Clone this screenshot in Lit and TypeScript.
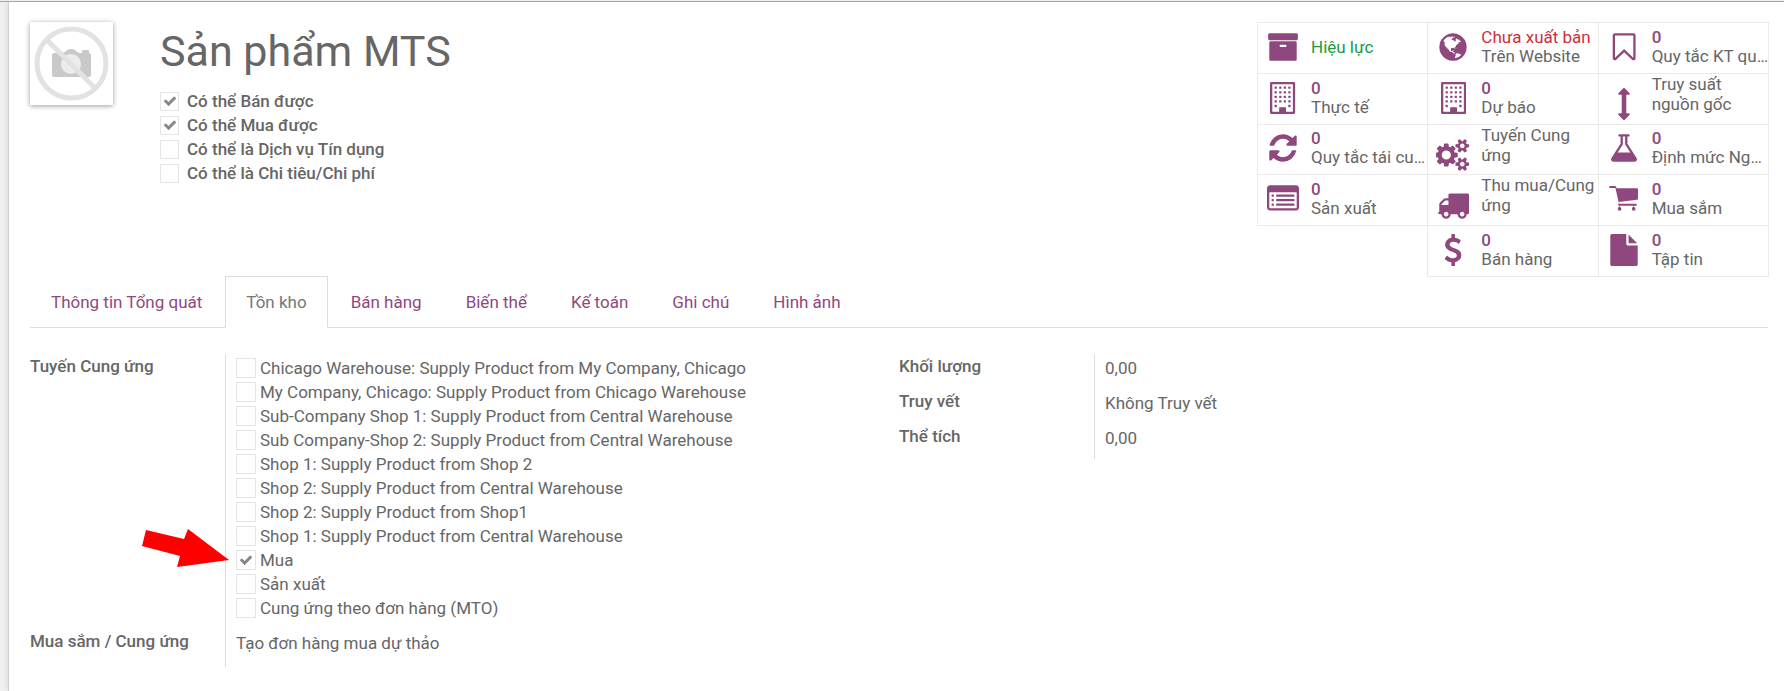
import { LitElement, html, svg, css, nothing } from "lit";
import { customElement, property, state } from "lit/decorators.js";
import { classMap } from "lit/directives/class-map.js";

const glyph = (d: string) => svg`<path d=${d}></path>`;

const dots = (xs: number[], ys: number[], size: number) =>
  ys.map((y) => xs.map((x) => svg`<rect x=${x} y=${y} width=${size} height=${size} rx="24"></rect>`));

const ICONS: Record<string, { width: number; body: unknown }> = {
  archive: {
    width: 1792,
    body: glyph(
      "M1088 832q0-26-19-45t-45-19h-256q-26 0-45 19t-19 45 19 45 45 19h256q26 0 45-19t19-45zm576-192v960q0 26-19 45t-45 19h-1408q-26 0-45-19t-19-45v-960q0-26 19-45t45-19h1408q26 0 45 19t19 45zm64-448v256q0 26-19 45t-45 19h-1536q-26 0-45-19t-19-45v-256q0-26 19-45t45-19h1536q26 0 45 19t19 45z"
    ),
  },
  globe: {
    width: 1792,
    body: glyph(
      "M896 128q209 0 385.500 103t279.500 279.500 103 385.500-103 385.500-279.500 279.500-385.500 103-385.500-103-279.500-279.500-103-385.500 103-385.500 279.500-279.500 385.500-103zm274 521q-2 1-9.500 9.500t-13.500 9.500q2 0 4.500-5t5-11 3.500-7q6-7 22-15 14-6 52-12 34-8 51 11-2-2 9.500-13t14.500-12q3-2 15-4.500t15-7.500l2-22q-12 1-17.500-7t-6.500-21q0 2-6 8 0-7-4.500-8t-11.500 1-9 1q-10-3-15-7.500t-8-16.500-4-15q-2-5-9.500-11t-9.500-10q-1-2-2.500-5.500t-3-6.500-4-5.500-5.500-2.500-7 5-7.500 10-4.500 5q-3-2-6-1.500t-4.500 1-4.500 3-5 3.500q-3 2-8.500 3t-8.500 2q15-5-1-11-10-4-16-3 9-4 7.500-12t-8.500-14h5q-1-4-8.500-8.500t-17.500-8.500-13-6q-8-5-34-9.500t-33-.5q-5 6-4.500 10.500t4 14 3.500 12.500q1 6-5.500 13t-6.500 12q0 7 14 15.500t10 21.500q-3 8-16 16t-16 12q-5 8-1.500 18.500t10.500 16.500q2 2 1.500 4t-3.500 4.500-5.500 4-6.500 3.500l-3 2q-11 5-20.500-6t-13.500-26q-7-25-16-30-23-8-29 1-5-13-41-26-25-9-58-4 6-1 0-15-7-15-19-12 3-6 4-17.500t1-13.500q3-13 12-23 1-1 7-8.500t9.500-13.500.5-6q35 4 50-11 5-5 11.500-17t10.500-17q9-6 14-5.500t14.500 5.500 14.500 5q14 1 15.500-11t-7.500-20q12 1 3-17-4-7-8-9-12-4-27 5-8 4 2 8-1-1-9.500 10.500t-16.500 17.500-16-5q-1-1-5.500-13.500t-9.500-13.500q-8 0-16 15 3-8-11-15t-24-8q19-12-8-27-7-4-20.500-5t-19.500 4q-5 7-5.500 11.500t5 8 10.500 5.500 11.500 4 8.500 3q14 10 8 14-2 1-8.500 3.500t-11.500 4.500-6 4q-3 4 0 14t-2 14q-5-5-9-17.500t-7-16.500q7 9-25 6l-10-1q-4 0-16 2t-20.500 1-13.500-8q-4-8 0-20 1-4 4-2-4-3-11-9.500t-10-8.500q-46 15-94 41 6 1 12-1 5-2 13-6.500t10-5.500q34-14 42-7l5-5q14 16 20 25-7-4-30-1-20 6-22 12 7 12 5 18-4-3-11.500-10t-14.500-11-15-5q-16 0-22 1-146 80-235 222 7 7 12 8 4 1 5 9t2.500 11 11.500-3q9 8 3 19 1-1 44 27 19 17 21 21 3 11-10 18-1-2-9-9t-9-4q-3 5 .5 18.500t10.500 12.500q-7 0-9.500 16t-2.500 35.500-1 23.500l2 1q-3 12 5.500 34.500t21.500 19.500q-13 3 20 43 6 8 8 9 3 2 12 7.500t15 10 10 10.500q4 5 10 22.500t14 23.500q-2 6 9.500 20t10.500 23q-1 0-2.500 1t-2.500 1q3 7 15.500 14t15.500 13q1 3 2 10t3 11 8 2q2-20-24-62-15-25-17-29-3-5-5.500-15.500t-4.500-14.500q2 0 6 1.500t8.500 3.500 7.500 4 2 3q-3 7 2 17.500t12 18.500 17 19 12 13q6 6 14 19.500t0 13.500q9 0 20 10.500t17 19.500q5 8 8 26t5 24q2 7 8.500 13.500t12.500 9.500l16 8 13 7q5 2 18.500 10.500t21.500 11.500q10 4 16 4t14.500-2.500 13.500-3.500q15-2 29 15t21 21q36 19 55 11-2 1 .5 7.500t8 15.500 9 14.500 5.500 8.500q5 6 18 15t18 15q6-4 7-9-3 8 7 20t18 10q14-3 14-32-31 15-49-18 0-1-2.500-5.500t-4-8.500-2.500-8.500 0-7.500 5-3q9 0 10-3.500t-2-12.500-4-13q-1-8-11-20t-12-15q-5 9-16 8t-16-9q0 1-1.500 5.500t-1.500 6.500q-13 0-15-1 1-3 2.500-17.500t3.500-22.500q1-4 5.500-12t7.500-14.500 4-12.500-4.500-9.500-17.500-2.500q-19 1-26 20-1 3-3 10.500t-5 11.500-9 7q-7 3-24 2t-24-5q-13-8-22.500-29t-9.500-37q0-10 2.500-26.500t3-25-5.500-24.500q3-2 9-9.500t10-10.500q2-1 4.500-1.500t4.500 0 4-1.500 3-6q-1-1-4-3-3-3-4-3 7 3 28.500-1.500t27.500 1.500q15 11 22-2 0-1-2.500-9.500t-.5-13.500q5 27 29 9 3 3 15.500 5t17.500 5q3 2 7 5.500t5.500 4.500 5-.5 8.500-6.500q10 14 12 24 11 40 19 44 7 3 11 2t4.500-9.500 0-14-1.500-12.500l-1-8v-18l-1-8q-15-3-18.500-12t1.500-18.500 15-18.500q1-1 8-3.500t15.500-6.500 12.500-8q21-19 15-35 7 0 11-9-1 0-5-3t-7.500-5-4.500-2q9-5 2-16 5-3 7.500-11t7.500-10q9 12 21 2 8-8 1-16 5-7 20.500-10.500t18.500-9.500q7 2 8-2t1-12 3-12q4-5 15-9t13-5l17-11q3-4 0-4 18 2 31-11 10-11-6-20 3-6-3-9.500t-15-5.500q3-1 11.500-.5t10.500-1.500q15-10-7-16-17-5-43 12zm-163 877q206-36 351-189-3-3-12.500-4.500t-12.500-3.500q-18-7-24-8 1-7-2.500-13t-8-9-12.500-8-11-7q-2-2-7-6t-7-5.500-7.500-4.500-8.500-2-10 1l-3 1q-3 1-5.500 2.500t-5.500 3-4 3 0 2.500q-21-17-36-22-5-1-11-5.500t-10.500-7-10-1.500-11.500 7q-5 5-6 15t-2 13q-7-5 0-17.500t2-18.500q-3-6-10.500-4.500t-12 4.500-11.500 8.500-9 6.500-8.500 5.500-8.500 7.500q-3 4-6 12t-5 11q-2-4-11.500-6.500t-9.500-5.500q2 10 4 35t5 38q7 31-12 48-27 25-29 40-4 22 12 26 0 7-8 20.500t-7 21.500q0 6 2 16z"
    ),
  },
  bookmark: {
    width: 1920,
    body: glyph(
      "M1472 256h-1024v1242l423-406 89-85 89 85 423 406v-1242zm12-128q23 0 44 9 33 13 52.500 41t19.500 62v1289q0 34-19.500 62t-52.500 41q-19 8-44 8-48 0-83-32l-441-424-441 424q-36 33-83 33-23 0-44-9-33-13-52.500-41t-19.500-62v-1289q0-34 19.500-62t52.500-41q21-9 44-9h1048z"
    ),
  },
  building: {
    width: 1408,
    body: svg`
      <path fill-rule="evenodd" d="M64 0h1280q64 0 64 64v1664q0 64-64 64h-1280q-64 0-64-64v-1664q0-64 64-64zM128 128v1536h384v-224q0-32 32-32h320q32 0 32 32v224h384v-1536z"></path>
      ${dots([256, 512, 768, 1024], [256, 512, 768, 1024], 128)}
      ${dots([256, 1024], [1280], 128)}
    `,
  },
  arrowsV: {
    width: 1792,
    body: glyph(
      "M1216 320q0 26-19 45t-45 19h-128v1024h128q26 0 45 19t19 45-19 45l-256 256q-19 19-45 19t-45-19l-256-256q-19-19-19-45t19-45 45-19h128v-1024h-128q-26 0-45-19t-19-45 19-45l256-256q19-19 45-19t45 19l256 256q19 19 19 45z"
    ),
  },
  refresh: {
    width: 1792,
    body: glyph(
      "M1639 1056q0 5-1 7-64 268-268 434.500t-478 166.500q-146 0-282.500-55t-243.500-157l-129 129q-19 19-45 19t-45-19-19-45v-448q0-26 19-45t45-19h448q26 0 45 19t19 45-19 45l-137 137q71 66 161 102t187 36q134 0 250-65t186-179q11-17 53-117 8-23 30-23h192q13 0 22.500 9.500t9.500 22.500zm25-800v448q0 26-19 45t-45 19h-448q-26 0-45-19t-19-45 19-45l138-138q-148-137-349-137-134 0-250 65t-186 179q-11 17-53 117-8 23-30 23h-199q-13 0-22.500-9.500t-9.500-22.500v-7q65-268 270-434.500t480-166.500q146 0 284 55.500t245 156.500l130-129q19-19 45-19t45 19 19 45z"
    ),
  },
  cogs: {
    width: 1920,
    body: glyph(
      "M832 896q0-106-75-181t-181-75-181 75-75 181 75 181 181 75 181-75 75-181zm768 512q0-52-38-90t-90-38-90 38-38 90q0 53 37.500 90.500t90.500 37.500 90.500-37.500 37.500-90.500zm0-1024q0-52-38-90t-90-38-90 38-38 90q0 53 37.500 90.500t90.500 37.500 90.500-37.500 37.500-90.500zm-384 421v185q0 10-7 19.500t-16 10.500l-155 24q-11 35-32 76 34 48 90 115 7 11 7 20 0 12-7 19-23 30-82.500 89.500t-78.500 59.500q-11 0-21-7l-115-90q-37 19-77 31-11 108-23 155-7 24-30 24h-186q-11 0-20-7.500t-10-17.500l-23-153q-34-10-75-31l-118 89q-7 7-20 7-11 0-21-8-144-133-144-160 0-9 7-19 10-14 41-53t47-61q-23-44-35-82l-152-24q-10-1-17-9.500t-7-19.500v-185q0-10 7-19.500t16-10.500l155-24q11-35 32-76-34-48-90-115-7-11-7-20 0-12 7-20 22-30 82-89t79-59q11 0 21 7l115 90q34-18 77-32 11-108 23-154 7-24 30-24h186q11 0 20 7.500t10 17.500l23 153q34 10 75 31l118-89q8-7 20-7 11 0 21 8 144 133 144 160 0 9-7 19-12 16-42 54t-45 60q23 48 34 82l152 23q10 2 17 10.500t7 19.500zm640 533v140q0 16-149 31-12 27-30 52 51 113 51 138 0 4-4 7-122 71-124 71-8 0-46-47t-52-68q-20 2-30 2t-30-2q-14 21-52 68t-46 47q-2 0-124-71-4-3-4-7 0-25 51-138-18-25-30-52-149-15-149-31v-140q0-16 149-31 13-29 30-52-51-113-51-138 0-4 4-7 4-2 35-20t59-34 30-16q8 0 46 46.500t52 67.500q20-2 30-2t30 2q51-71 92-112l6-2q4 0 124 70 4 3 4 7 0 25-51 138 17 23 30 52 149 15 149 31zm0-1024v140q0 16-149 31-12 27-30 52 51 113 51 138 0 4-4 7-122 71-124 71-8 0-46-47t-52-68q-20 2-30 2t-30-2q-14 21-52 68t-46 47q-2 0-124-71-4-3-4-7 0-25 51-138-18-25-30-52-149-15-149-31v-140q0-16 149-31 13-29 30-52-51-113-51-138 0-4 4-7 4-2 35-20t59-34 30-16q8 0 46 46.500t52 67.500q20-2 30-2t30 2q51-71 92-112l6-2q4 0 124 70 4 3 4 7 0 25-51 138 17 23 30 52 149 15 149 31z"
    ),
  },
  flask: {
    width: 1792,
    body: glyph(
      "M1591 1448q56 89 21.500 152.500t-140.500 63.500h-1152q-106 0-140.500-63.500t21.500-152.500l503-793v-399h-64q-26 0-45-19t-19-45 19-45 45-19h512q26 0 45 19t19 45-19 45-45 19h-64v399zm-779-725l-272 429h712l-272-429-20-31v-436h-128v436z"
    ),
  },
  listAlt: {
    width: 1792,
    body: svg`
      <path fill-rule="evenodd" d="M160 128h1472q66 0 113 47t47 113v1088q0 66-47 113t-113 47h-1472q-66 0-113-47t-47-113v-1088q0-66 47-113t113-47zM160 512q-32 0-32 32v832q0 32 32 32h1472q32 0 32-32v-832q0-32-32-32z"></path>
      ${dots([256], [640, 896, 1152], 128)}
      ${[640, 896, 1152].map((y) => svg`<rect x="512" y=${y} width="1024" height="128" rx="32"></rect>`)}
    `,
  },
  truck: {
    width: 1792,
    body: glyph(
      "M640 1408q0-52-38-90t-90-38-90 38-38 90 38 90 90 38 90-38 38-90zm-384-512h384v-256h-158q-13 0-22 9l-195 195q-9 9-9 22v30zm1280 512q0-52-38-90t-90-38-90 38-38 90 38 90 90 38 90-38 38-90zm256-1088v1024q0 15-4 26.500t-13.500 18.500-16.500 11.500-23.500 6-22.500 2-25.500 0-22.500-.5q0 106-75 181t-181 75-181-75-75-181h-384q0 106-75 181t-181 75-181-75-75-181h-64q-3 0-22.500.5t-25.500 0-22.500-2-23.500-6-16.500-11.500-13.500-18.500-4-26.500q0-26 19-45t45-19v-320q0-8-.5-35t0-38 2.500-34.500 6.500-37 14-30.500 22.500-30l198-198q19-19 50.500-32t58.500-13h160v-192q0-26 19-45t45-19h1024q26 0 45 19t19 45z"
    ),
  },
  cart: {
    width: 1792,
    body: svg`
      <path d="M60 224q0-60 60-60h270q50 0 66 50l24 76h1140q60 0 60 60v530q0 56-56 64l-1020 124 24 100h940q50 0 50 52t-50 52h-120v70q60 10 80 60t0 100-90 50-90-50 0-100 70-60v-70h-760v70q60 10 80 60t0 100-90 50-90-50 0-100 70-60v-70q-60-4-60-60 0-30 44-60l-196-873h-296q-60 0-60-60z"></path>
    `,
  },
  dollar: {
    width: 1792,
    body: glyph(
      "M1362 1185q0 153-99.500 263.500t-258.500 136.500v175q0 14-9 23t-23 9h-135q-13 0-22.500-9.500t-9.500-22.500v-175q-66-9-127.500-31t-101.500-44.500-74-48-46.500-37.500-17.500-18q-17-21-2-41l103-135q7-10 23-12 15-2 24 9l2 2q113 99 243 125 37 8 74 8 81 0 142.500-43t61.500-122q0-28-15-53t-33.500-42-58.500-37.500-66-32-80-32.500q-39-16-61.500-25t-61.500-26.500-62.500-31-56.500-35.500-53.500-42.500-43.500-49-35.500-58-21-66.500-8.500-78q0-138 98-242t255-134v-180q0-13 9.500-22.500t22.500-9.500h135q14 0 23 9t9 23v176q57 6 110.500 23t87 33.500 63.500 37.500 39 29 15 14q17 18 5 38l-81 146q-8 15-23 16-14 3-27-7-3-3-14.500-12t-39-26.500-58.500-32-74.500-26-85.500-11.500q-95 0-155 43t-60 111q0 26 8.500 48t29.500 41.500 39.500 33 56 31 60.500 27 70 27.500q53 20 81 31.500t76 35 75.500 42.500 62 50 53 63.500 31.500 76.500 13 94z"
    ),
  },
  file: {
    width: 1792,
    body: glyph(
      "M1152 512v-472q22 14 36 28l408 408q14 14 28 36h-472zm-128 32q0 40 28 68t68 28h544v1056q0 40-28 68t-68 28h-1344q-40 0-68-28t-28-68v-1600q0-40 28-68t68-28h800v544z"
    ),
  },
};

interface Stat {
  icon: string;
  value?: string;
  label?: string;
  status?: "good" | "bad";
  wrap?: boolean;
  offset?: boolean;
}

const STATS: Stat[] = [
  { icon: "archive", value: "Hiệu lực", status: "good" },
  { icon: "globe", value: "Chưa xuất bản", status: "bad", label: "Trên Website" },
  { icon: "bookmark", value: "0", label: "Quy tắc KT qu…" },
  { icon: "building", value: "0", label: "Thực tế" },
  { icon: "building", value: "0", label: "Dự báo" },
  { icon: "arrowsV", label: "Truy suất nguồn gốc", wrap: true },
  { icon: "refresh", value: "0", label: "Quy tắc tái cu…" },
  { icon: "cogs", label: "Tuyến Cung ứng", wrap: true },
  { icon: "flask", value: "0", label: "Định mức Ng…" },
  { icon: "listAlt", value: "0", label: "Sản xuất" },
  { icon: "truck", label: "Thu mua/Cung ứng", wrap: true },
  { icon: "cart", value: "0", label: "Mua sắm" },
  { icon: "dollar", value: "0", label: "Bán hàng", offset: true },
  { icon: "file", value: "0", label: "Tập tin" },
];

const OPTIONS = [
  { label: "Có thể Bán được", checked: true },
  { label: "Có thể Mua được", checked: true },
  { label: "Có thể là Dịch vụ Tín dụng", checked: false },
  { label: "Có thể là Chi tiêu/Chi phí", checked: false },
];

const TABS = ["Thông tin Tổng quát", "Tồn kho", "Bán hàng", "Biến thể", "Kế toán", "Ghi chú", "Hình ảnh"];

const ROUTES = [
  { label: "Chicago Warehouse: Supply Product from My Company, Chicago" },
  { label: "My Company, Chicago: Supply Product from Chicago Warehouse" },
  { label: "Sub-Company Shop 1: Supply Product from Central Warehouse" },
  { label: "Sub Company-Shop 2: Supply Product from Central Warehouse" },
  { label: "Shop 1: Supply Product from Shop 2" },
  { label: "Shop 2: Supply Product from Central Warehouse" },
  { label: "Shop 2: Supply Product from Shop1" },
  { label: "Shop 1: Supply Product from Central Warehouse" },
  { label: "Mua", checked: true, pointed: true },
  { label: "Sản xuất" },
  { label: "Cung ứng theo đơn hàng (MTO)" },
];

@customElement("stat-button")
export class StatButton extends LitElement {
  @property({ attribute: false }) stat!: Stat;

  static styles = css`
    :host {
      display: block;
      min-width: 0;
      margin: 0 -1px -1px 0;
    }
    .stat {
      display: flex;
      align-items: center;
      box-sizing: border-box;
      width: 100%;
      height: 100%;
      padding: 0 1px 2px 0;
      border: 1px solid #eaeaea;
      background: #fff;
      color: #666;
      font: 400 17px/19px Roboto, sans-serif;
      text-align: left;
      cursor: pointer;
    }
    .icon {
      display: flex;
      flex: none;
      justify-content: center;
      width: 50px;
      margin-right: 3px;
    }
    .icon svg {
      height: 32px;
      fill: #8f487e;
    }
    .text {
      display: flex;
      flex-direction: column;
      flex: 1;
      min-width: 0;
    }
    .value {
      color: #8f487e;
      font-weight: 500;
    }
    .good,
    .bad {
      font-weight: 400;
      line-height: 20px;
      white-space: nowrap;
    }
    .good {
      color: #219a3e;
    }
    .bad {
      color: #cb2f3b;
    }
    .label {
      white-space: nowrap;
    }
    .wrap {
      align-items: flex-start;
    }
    .wrap .icon {
      padding-top: 14px;
    }
    .wrap .label {
      line-height: 20px;
      white-space: normal;
    }
  `;

  render() {
    const { icon, value, label, status, wrap } = this.stat;
    const { width, body } = ICONS[icon];
    return html`
      <button type="button" class=${classMap({ stat: true, wrap: !!wrap })}>
        <span class="icon"><svg viewBox="0 0 ${width} 1792" aria-hidden="true">${body}</svg></span>
        <span class="text">
          ${value
            ? html`<span class=${classMap({ value: true, good: status === "good", bad: status === "bad" })}>${value}</span>`
            : nothing}
          ${label ? html`<span class="label">${label}</span>` : nothing}
        </span>
      </button>
    `;
  }
}

@customElement("app-root")
export class AppRoot extends LitElement {
  @state() private activeTab = 1;

  static styles = css`
    :host {
      display: block;
      min-height: 100vh;
      box-sizing: border-box;
      padding-top: 1px;
      background: #f0f0f0;
      color: #666;
      font: 400 17px/24px Roboto, sans-serif;
    }
    .sheet {
      box-sizing: border-box;
      min-height: calc(100vh - 1px);
      border-top: 1px solid #a3a6a3;
      display: grid;
      grid-template-columns: 8px minmax(0, 1fr);
    }
    .page {
      grid-column: 2;
      padding: 20px 16px 16px 21px;
      border-left: 1px solid #cfcfcf;
      background: #fff;
      box-shadow: 0 0 6px rgba(0, 0, 0, 0.12);
      clip-path: inset(0 0 0 -8px);
    }
    .head {
      display: flex;
      align-items: flex-start;
    }
    .photo {
      flex: none;
      width: 83px;
      height: 83px;
      margin-right: 47px;
      background: #fff;
      box-shadow: 0 1px 5px rgba(0, 0, 0, 0.4);
    }
    .title {
      flex: 1;
      min-width: 0;
    }
    h1 {
      margin: 0 0 9px;
      font-size: 43px;
      font-weight: 400;
      line-height: 58px;
    }
    .check {
      display: flex;
      align-items: center;
      height: 24px;
      position: relative;
    }
    input {
      appearance: none;
      flex: none;
      box-sizing: border-box;
      width: 19px;
      height: 19px;
      margin: 0 8px 0 0;
      border: 1px solid #e4e4e4;
      background: #fff center / 14px 14px no-repeat;
    }
    input:checked {
      background-image: url("data:image/svg+xml,%3Csvg xmlns='http://www.w3.org/2000/svg' viewBox='0 0 1792 1792'%3E%3Cpath fill='%23888' d='M1671 566q0 40-28 68l-724 724-136 136q-28 28-68 28t-68-28l-136-136-362-362q-28-28-28-68t28-68l136-136q28-28 68-28t68 28l294 295 656-657q28-28 68-28t68 28l136 136q28 28 28 68z'/%3E%3C/svg%3E");
    }
    .bold {
      font-weight: 500;
    }
    .stats {
      display: grid;
      grid-template-columns: repeat(3, minmax(0, 1fr));
      grid-template-rows: repeat(5, 1fr);
      flex: none;
      width: 511px;
      height: 254px;
    }
    .offset {
      grid-column-start: 2;
    }
    .tabs {
      display: flex;
      border-bottom: 1px solid #ddd;
    }
    .tab {
      margin: 0 2px -1px 0;
      padding: 13px 20px;
      border: 1px solid transparent;
      color: #8f487e;
      text-decoration: none;
    }
    .tab.active {
      border-color: #ddd #ddd #fff;
      background: #fff;
      color: #777;
    }
    .groups {
      display: grid;
      grid-template-columns: repeat(2, minmax(0, 1fr));
      align-items: start;
      padding-top: 26px;
    }
    .group {
      display: grid;
      grid-template-columns: 195px minmax(0, 1fr);
    }
    .name {
      padding-bottom: 11px;
      font-weight: 500;
    }
    .field {
      border-left: 1px solid #ddd;
      padding: 2px 10px 9px;
    }
    .last {
      padding-bottom: 12px;
    }
    .routes input {
      width: 20px;
      height: 20px;
      margin-right: 4px;
    }
    .arrow {
      position: absolute;
      left: -94px;
      top: -19px;
      width: 88px;
      height: 39px;
      fill: #f00;
    }
  `;

  private renderCheck(id: string, label: string, checked: boolean, bold: boolean, pointed = false) {
    return html`
      <div class="check">
        <input type="checkbox" id=${id} .checked=${checked} />
        <label class=${classMap({ bold })} for=${id}>${label}</label>
        ${pointed
          ? html`<svg class="arrow" viewBox="0 0 88 39" aria-hidden="true">
              <path d="M4 1L42 10L46 0L87 31L35 38L38 27L0 17Z"></path>
            </svg>`
          : nothing}
      </div>
    `;
  }

  render() {
    return html`
      <div class="sheet">
        <main class="page">
          <header class="head">
            <svg class="photo" viewBox="0 0 83 83" role="img" aria-label="Sản phẩm MTS">
              <path
                fill="#c9c9c9"
                d="M24 31h8q3 0 5-3 4-2 8 0 2 3 5 3h2v-2q0-1 1-1h5q1 0 1 1v2q2 0 2 2v20q0 2-2 2H24q-2 0-2-2V33q0-2 2-2z"
              ></path>
              <circle cx="41" cy="42" r="10" fill="#ececec"></circle>
              <circle cx="41.500" cy="41.500" r="34.500" fill="none" stroke="#e2e2e2" stroke-width="5"></circle>
              <path d="M17 18L65 66" stroke="#e2e2e2" stroke-width="5"></path>
            </svg>
            <div class="title">
              <h1>Sản phẩm MTS</h1>
              ${OPTIONS.map((o, i) => this.renderCheck(`option-${i}`, o.label, o.checked, true))}
            </div>
            <div class="stats">
              ${STATS.map(
                (s) => html`<stat-button class=${classMap({ offset: !!s.offset })} .stat=${s}></stat-button>`
              )}
            </div>
          </header>
          <nav class="tabs">
            ${TABS.map(
              (t, i) => html`<a
                href="#"
                class=${classMap({ tab: true, active: i === this.activeTab })}
                @click=${(e: Event) => {
                  e.preventDefault();
                  this.activeTab = i;
                }}
                >${t}</a
              >`
            )}
          </nav>
          <section class="groups">
            <div class="group">
              <div class="name">Tuyến Cung ứng</div>
              <div class="field routes">
                ${ROUTES.map((r, i) => this.renderCheck(`route-${i}`, r.label, !!r.checked, false, r.pointed))}
              </div>
              <div class="name">Mua sắm / Cung ứng</div>
              <div class="field last">Tạo đơn hàng mua dự thảo</div>
            </div>
            <div class="group">
              <div class="name">Khối lượng</div>
              <div class="field">0,00</div>
              <div class="name">Truy vết</div>
              <div class="field">Không Truy vết</div>
              <div class="name">Thể tích</div>
              <div class="field">0,00</div>
            </div>
          </section>
        </main>
      </div>
    `;
  }
}
